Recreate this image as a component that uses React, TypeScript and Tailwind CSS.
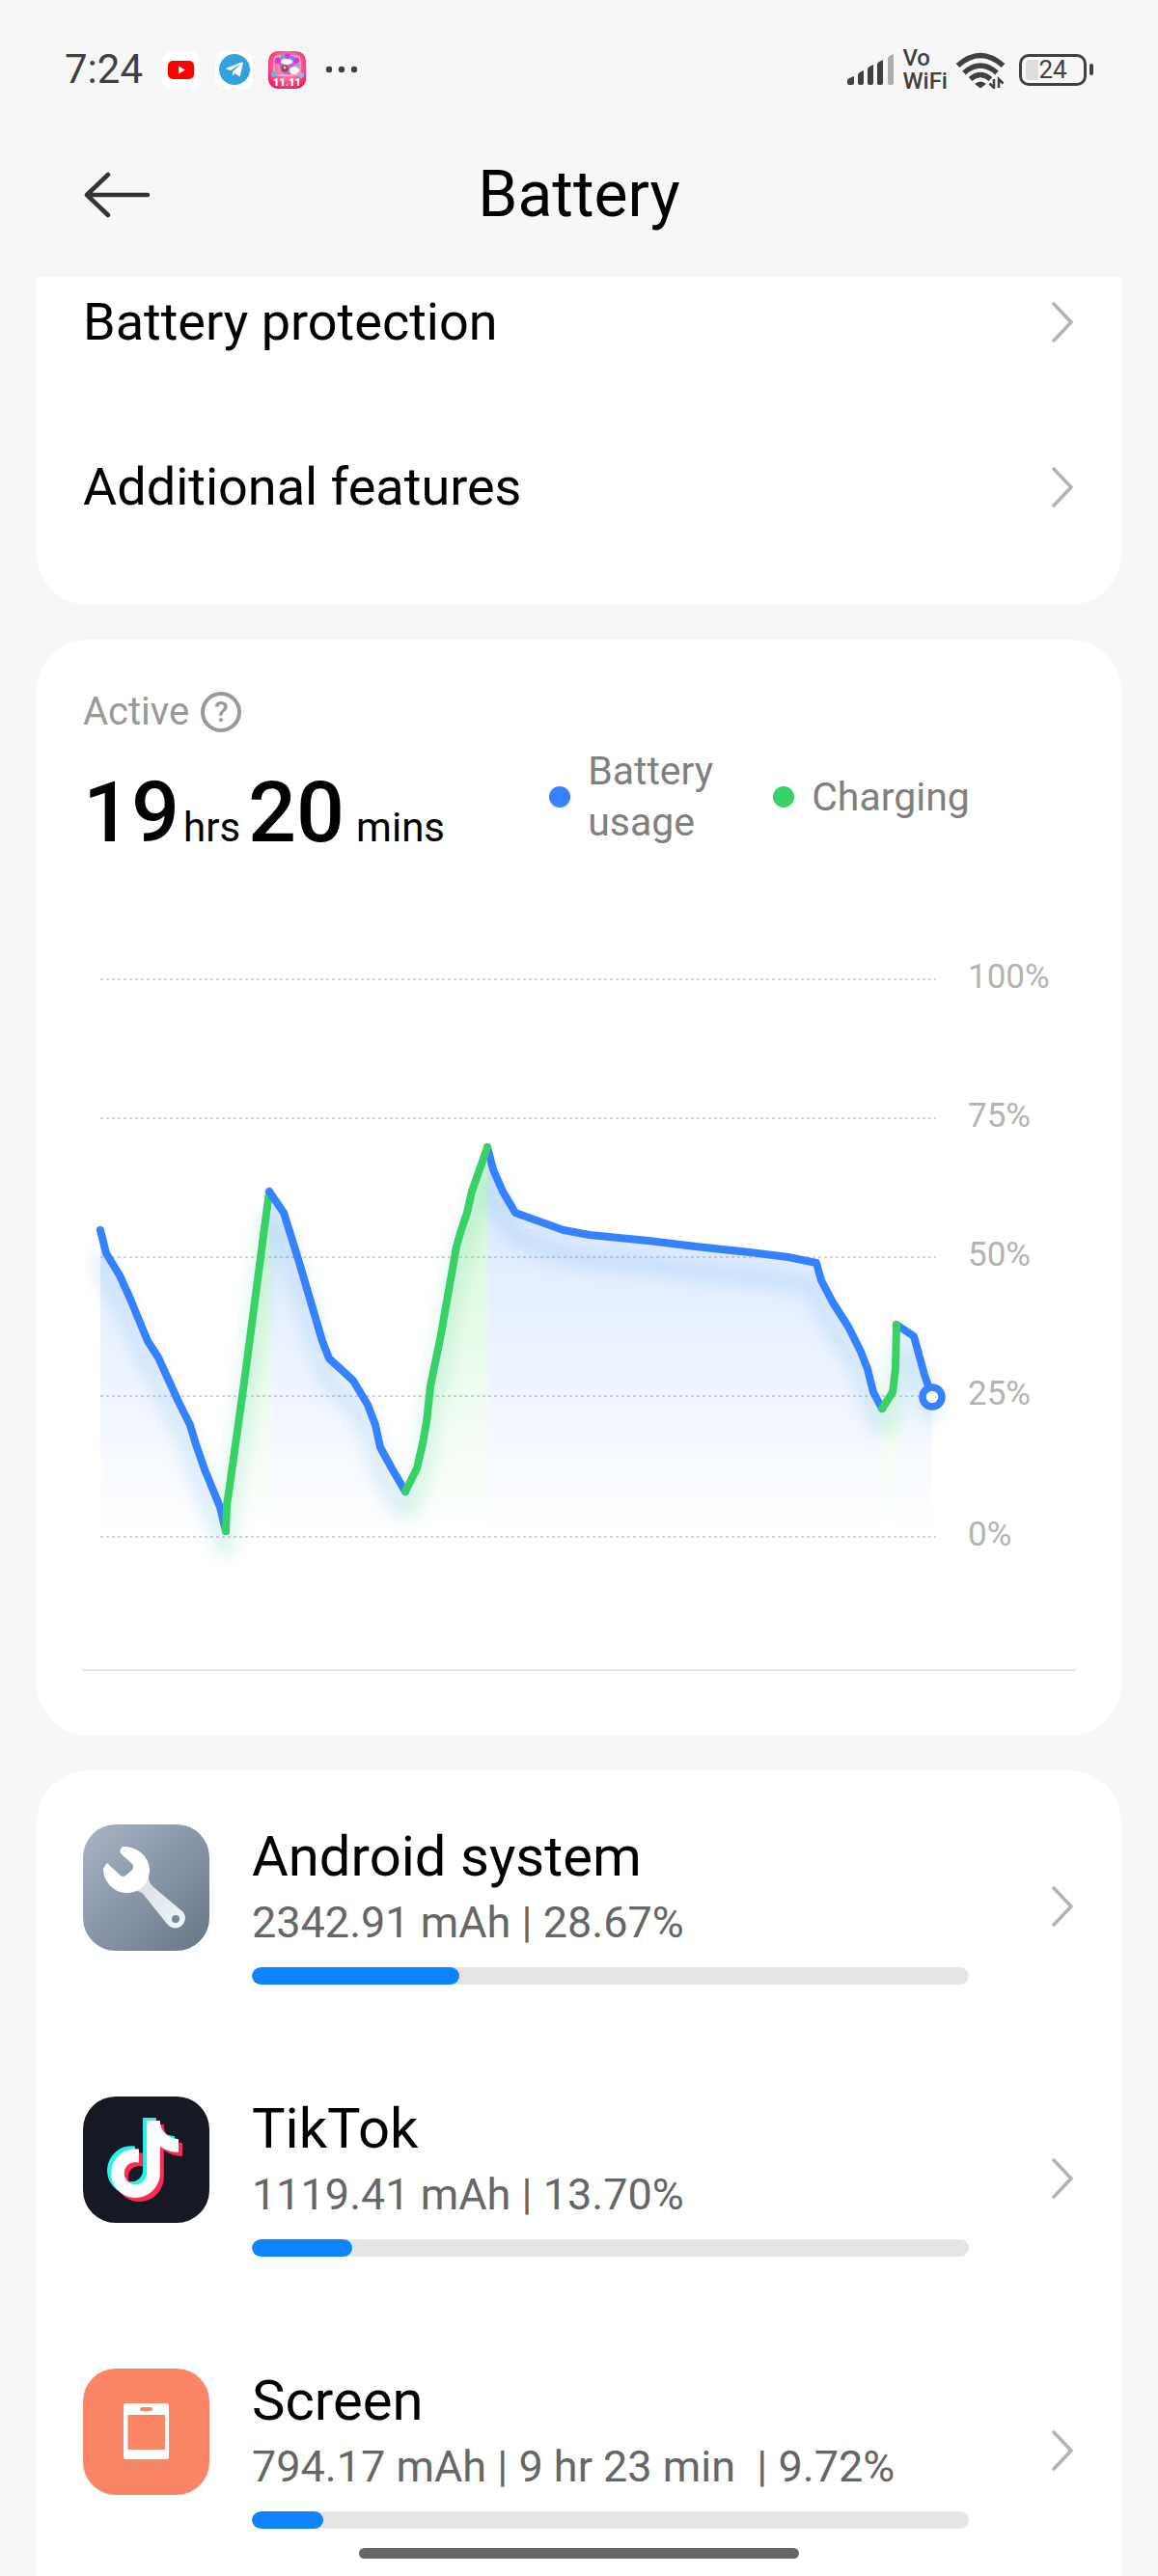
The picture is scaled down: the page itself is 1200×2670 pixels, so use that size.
import React from 'react';
import { FaTelegramPlane } from 'react-icons/fa';
import { FaTiktok } from 'react-icons/fa6';

const blue = '#3482ff';
const green = '#37d167';

// x and y run from the top left corner of the plot, 0% is at y = 578
const segments = [
  { color: blue, fill: 'url(#blueFill)', points: [[0, 260], [6, 284], [20, 307], [30, 329], [49, 375], [60, 392], [81, 438], [93, 462], [99, 482], [108, 508], [124, 547], [130, 572]] },
  { color: green, fill: 'url(#greenFill)', points: [[130, 572], [131, 545], [134, 525], [149, 418], [175, 220]] },
  { color: blue, fill: 'url(#blueFill)', points: [[175, 220], [190, 242], [205, 290], [230, 375], [237, 393], [262, 416], [277, 441], [285, 462], [290, 485], [302, 507], [316, 531]] },
  { color: blue, fill: 'url(#blueFill)', points: [[401, 174], [407, 197], [417, 220], [430, 242], [455, 251], [480, 260], [507, 265], [568, 271], [617, 277], [673, 283], [713, 288], [742, 294], [747, 312], [759, 335], [775, 360], [788, 386], [795, 404], [801, 428], [810, 445]] },
  { color: green, fill: 'url(#greenFill)', points: [[316, 531], [328, 507], [334, 481], [338, 459], [342, 422], [353, 368], [369, 277], [373, 263], [380, 242], [385, 220], [401, 174]] },
  { color: blue, fill: 'url(#blueFill)', points: [[825, 358], [843, 370], [854, 410], [862, 433]] },
  { color: green, fill: 'url(#greenFill)', points: [[810, 445], [821, 428], [824, 404], [825, 358]] },
];

const gridLines = [
  { label: '100%', y: 0 },
  { label: '75%', y: 144 },
  { label: '50%', y: 288 },
  { label: '25%', y: 432 },
  { label: '0%', y: 578 },
];

const toLine = (points: number[][]) => 'M' + points.map(p => p.join(' ')).join('L');
const toArea = (points: number[][]) => `${toLine(points)}L${points[points.length - 1][0]} 578L${points[0][0]} 578Z`;

const Chevron = () => (
  <svg viewBox="0 0 24 44" className="h-11 w-6 shrink-0" fill="none" stroke="#b3b3b3" strokeWidth="3.6" strokeLinecap="round" strokeLinejoin="round">
    <path d="M2 3L20 22L2 41" />
  </svg>
);

const WrenchIcon = () => (
  <svg viewBox="0 0 131 131" className="size-full">
    <defs>
      <linearGradient id="steel" x1="0" y1="0" x2="1" y2="1">
        <stop offset="0" stopColor="#a9b5c5" />
        <stop offset="1" stopColor="#667587" />
      </linearGradient>
      <linearGradient id="handle" x1="0" y1="0" x2="1" y2="1">
        <stop offset="0" stopColor="#dcdde3" />
        <stop offset="1" stopColor="#eef8fa" />
      </linearGradient>
    </defs>
    <rect width="131" height="131" fill="url(#steel)" />
    <path fillRule="evenodd" fill="url(#handle)" d="M55 69Q60 69 63 73L87 103A10 10 0 0 0 104 91L72 64Q68 60 68 55ZM96 94A4 4 0 1 1 96 102A4 4 0 1 1 96 94Z" />
    <path fill="#fff" d="M41 23C54 22 69 32 69 47C69 61 59 71 45 71C32 71 21 59 21 46Q22 44 24 41Q26 39 27 42L39 53Q42 55 44 53L51 47Q53 45 52 42L39 30Q37 27 41 23Z" />
  </svg>
);

const TikTokIcon = () => (
  <div className="relative size-full bg-[#161823]">
    <FaTiktok className="absolute left-[20px] top-[22px] size-[80px] text-[#25f4ee]" />
    <FaTiktok className="absolute left-[28px] top-[29px] size-[80px] text-[#fe2c55]" />
    <FaTiktok className="absolute left-[24px] top-[25px] size-[80px] text-white" />
  </div>
);

const ScreenIcon = () => (
  <svg viewBox="0 0 131 131" className="size-full">
    <rect width="131" height="131" fill="#fa8567" />
    <rect x="42" y="36" width="47" height="58" rx="3" fill="#fff" />
    <rect x="46.500" y="48" width="38.500" height="36" fill="#fa8567" />
    <rect x="59" y="40" width="13" height="4" rx="2" fill="#fa8567" />
  </svg>
);

const apps = [
  { name: 'Android system', usage: '2342.91 mAh | 28.67%', percent: 29, icon: <WrenchIcon /> },
  { name: 'TikTok', usage: '1119.41 mAh | 13.70%', percent: 14, icon: <TikTokIcon /> },
  { name: 'Screen', usage: '794.17 mAh | 9 hr 23 min  | 9.72%', percent: 10, icon: <ScreenIcon /> },
];

const StatusBar = () => (
  <div className="flex h-36 shrink-0 items-center justify-between px-[67px] text-[#404040]">
    <div className="flex items-center gap-4">
      <span className="mr-1 text-[42px] leading-none">7:24</span>
      <svg viewBox="0 0 39 39" className="size-[39px]">
        <rect width="39" height="39" rx="10" fill="#fff" />
        <rect x="6" y="10" width="27" height="19" rx="5" fill="#f00" />
        <path d="M17 15.500L24 19.500L17 23.500Z" fill="#fff" />
      </svg>
      <div className="flex size-[39px] items-center justify-center rounded-[10px] bg-white">
        <div className="flex size-8 items-center justify-center rounded-full bg-[#33a1de]">
          <FaTelegramPlane className="size-5 text-white" />
        </div>
      </div>
      <svg viewBox="0 0 39 39" className="size-[39px]">
        <defs>
          <radialGradient id="sale" cx="0.500" cy="0.400" r="0.650">
            <stop offset="0" stopColor="#ffb9d0" />
            <stop offset="0.500" stopColor="#fb6f9a" />
            <stop offset="1" stopColor="#f2185b" />
          </radialGradient>
        </defs>
        <rect width="39" height="39" rx="10" fill="url(#sale)" />
        <rect x="6" y="5" width="27" height="20" rx="4" fill="none" stroke="#ffc4dc" strokeWidth="1" />
        <circle cx="10" cy="10" r="3" fill="#e22fe0" />
        <circle cx="15" cy="6" r="2.500" fill="#4ab7ee" />
        <circle cx="20" cy="5" r="3" fill="#d936e6" />
        <circle cx="25" cy="7" r="2.500" fill="#3fa6e8" />
        <circle cx="29" cy="10" r="3" fill="#e22fe0" />
        <circle cx="31" cy="14" r="2" fill="#53c3f0" />
        <path d="M11 13Q19 6 28 13L26 21Q19 28 13 21Z" fill="#b16be0" />
        <ellipse cx="19" cy="11" rx="6" ry="3" fill="#fff" />
        <circle cx="17" cy="18" r="3.500" fill="#8c4a3a" />
        <circle cx="17" cy="17" r="1.500" fill="#ffc65c" />
        <ellipse cx="27" cy="20" rx="5" ry="4" fill="#fff" />
        <circle cx="6" cy="24" r="3" fill="#54b9e6" />
        <circle cx="34" cy="25" r="3" fill="#8fb4f2" />
        <text x="19.500" y="36" textAnchor="middle" fontSize="11" fontWeight="900" fill="#fff">11.11</text>
      </svg>
      <svg viewBox="0 0 34 8" className="ml-1 h-2 w-[34px]" fill="#404040">
        <circle cx="4" cy="4" r="3.200" />
        <circle cx="17" cy="4" r="3.200" />
        <circle cx="30" cy="4" r="3.200" />
      </svg>
    </div>
    <div className="flex items-center gap-2">
      <svg viewBox="0 0 50 36" className="h-9 w-[50px]" fill="#404040">
        <path d="M1 32V30Q1 28 3 27L8 25V32Q8 34 6 34H3Q1 34 1 32Z" />
        <path d="M12 32V24Q12 22 14 21L18 19V32Q18 34 16 34H14Q12 34 12 32Z" />
        <path d="M22 32V18Q22 16 24 15L28 13V32Q28 34 26 34H24Q22 34 22 32Z" />
        <path d="M32 32V13Q32 11 34 10L38 8V32Q38 34 36 34H34Q32 34 32 32Z" />
        <path d="M43 32V7Q43 5 45 4L49 2V32Q49 34 47 34H45Q43 34 43 32Z" fill="#adadad" />
      </svg>
      <div className="flex flex-col text-[24px] font-medium leading-[24px]">
        <span>Vo</span>
        <span>WiFi</span>
      </div>
      <svg viewBox="0 0 54 40" className="mr-1 h-10 w-[54px]" fill="none" stroke="#404040" strokeWidth="5.500">
        <path d="M2.500 16Q26 -5 49.500 16" />
        <path d="M9 23.500Q26 8.500 43 23.500" />
        <path d="M15.500 30Q26 21 36.500 30" />
        <path d="M20 35Q26 30 32 35L26 39.500Z" fill="#404040" stroke="none" />
        <path d="M40 30V39L35.500 34.500M45 39V30L49.500 34.500" strokeWidth="2.500" />
      </svg>
      <div className="flex items-center gap-[3px]">
        <div className="relative flex h-[33px] w-[70px] items-center justify-center rounded-[10px] border-[3px] border-[#404040]">
          <div className="absolute inset-y-[3px] left-1 w-[13px] rounded-l-[4px] bg-[#dddddd]" />
          <span className="relative text-[26px] leading-none">24</span>
        </div>
        <div className="h-3 w-1 rounded-full bg-[#404040]" />
      </div>
    </div>
  </div>
);

const UsageChart = () => (
  <svg viewBox="0 0 1028 640" className="mt-[106px] block w-full" role="img" aria-label="Battery level">
    <defs>
      <linearGradient id="blueFill" gradientUnits="userSpaceOnUse" x1="0" y1="174" x2="0" y2="578">
        <stop offset="0" stopColor={blue} stopOpacity="0.200" />
        <stop offset="1" stopColor={blue} stopOpacity="0" />
      </linearGradient>
      <linearGradient id="greenFill" gradientUnits="userSpaceOnUse" x1="0" y1="174" x2="0" y2="578">
        <stop offset="0" stopColor="#41e04f" stopOpacity="0.240" />
        <stop offset="1" stopColor="#41e04f" stopOpacity="0" />
      </linearGradient>
      <filter id="soften" x="-10%" y="-10%" width="120%" height="130%">
        <feGaussianBlur stdDeviation="9" />
      </filter>
    </defs>
    <g transform="translate(18 30)">
      {gridLines.map(g => (
        <g key={g.label}>
          <path d={`M0 ${g.y}H866`} stroke="#d4d4d4" strokeWidth="2" strokeDasharray="3 3" />
          <text x="899" y={g.y + 9} fontSize="35" fill="#b3b3b3">{g.label}</text>
        </g>
      ))}
      {segments.map((s, i) => <path key={i} d={toArea(s.points)} fill={s.fill} />)}
      <g filter="url(#soften)" opacity="0.180" transform="translate(0 25)" fill="none" strokeWidth="18" strokeLinejoin="round">
        {segments.map((s, i) => <path key={i} d={toLine(s.points)} stroke={s.color === blue ? '#3f9be0' : '#37c98a'} />)}
      </g>
      {segments.map((s, i) => (
        <path key={i} d={toLine(s.points)} fill="none" stroke={s.color} strokeWidth="8" strokeLinecap="round" strokeLinejoin="round" />
      ))}
      <circle cx="862" cy="433" r="10" fill="#fff" stroke={blue} strokeWidth="7.500" />
    </g>
  </svg>
);

const App = () => {
  return (
    <div className="relative flex h-screen flex-col overflow-hidden bg-[#f7f7f7] font-[Roboto,sans-serif] text-black">
      <StatusBar />
      <header className="grid h-[143px] shrink-0 grid-cols-[1fr_auto_1fr] items-center px-[86px] pb-7">
        <button aria-label="Back" className="w-fit">
          <svg viewBox="0 0 70 48" className="h-12 w-[70px]" fill="none" stroke="#333" strokeWidth="4.500" strokeLinecap="round" strokeLinejoin="round">
            <path d="M26 3L4 24L26 45M4 24H67" />
          </svg>
        </button>
        <h1 className="text-[66px] leading-[76px]">Battery</h1>
      </header>

      <main className="flex min-h-0 flex-1 flex-col gap-9 overflow-hidden px-[38px] *:shrink-0">
        <section className="rounded-b-[54px] bg-white px-12 pb-9">
          <a href="#protection" className="flex items-center justify-between pb-[53px] pt-[15px]">
            <span className="text-[54px] leading-[64px]">Battery protection</span>
            <Chevron />
          </a>
          <a href="#features" className="flex items-center justify-between py-[54px]">
            <span className="text-[54px] leading-[64px]">Additional features</span>
            <Chevron />
          </a>
        </section>

        <section className="rounded-[54px] bg-white px-12 pb-[67px] pt-12">
          <div className="flex h-[54px] items-center gap-3 text-[#999999]">
            <span className="text-[40px] leading-none">Active</span>
            <button aria-label="About active time" className="flex size-[42px] items-center justify-center rounded-full border-[4px] border-[#999999] text-[30px] font-medium leading-none">?</button>
          </div>
          <div className="mt-2 flex items-center">
            <p className="w-[47%] self-end whitespace-nowrap text-[88px] leading-[72px]">
              <span className="font-medium">19</span>
              <span className="ml-1 text-[42px] leading-none">hrs</span>
              <span className="ml-2 font-medium">20</span>
              <span className="ml-3 text-[42px] leading-none">mins</span>
            </p>
            <div className="flex items-center gap-10 text-[41px] leading-[53px] text-[#808080]">
              <div className="flex items-center gap-[18px]">
                <span className="size-[22px] shrink-0 rounded-full bg-[#3482ff]" />
                <span className="w-[152px]">Battery usage</span>
              </div>
              <div className="flex items-center gap-[18px]">
                <span className="size-[22px] shrink-0 rounded-full bg-[#37d167]" />
                <span>Charging</span>
              </div>
            </div>
          </div>
          <UsageChart />
          <div className="mt-[105px] h-0.5 bg-[#e5e5e5]" />
        </section>

        <section className="rounded-t-[54px] bg-white px-12">
          {apps.map(app => (
            <a key={app.name} href={`#${app.name}`} className="flex items-center py-14">
              <div className="size-[131px] shrink-0 self-start overflow-hidden rounded-[34px]">{app.icon}</div>
              <div className="ml-11 mr-[86px] flex-1 pb-1">
                <h2 className="text-[58px] leading-[66px]">{app.name}</h2>
                <p className="whitespace-pre text-[45px] leading-[72px] text-[#666666]">{app.usage}</p>
                <div className="mt-[10px] h-[18px] overflow-hidden rounded-full bg-[#e5e5e5]">
                  <div className="h-full rounded-full bg-[#0d84ff]" style={{ width: `${app.percent}%` }} />
                </div>
              </div>
              <Chevron />
            </a>
          ))}
        </section>
      </main>

      <div className="absolute bottom-[18px] left-1/2 h-[11px] w-[38%] -translate-x-1/2 rounded-full bg-[#666666]" />
    </div>
  );
};

export default App;
